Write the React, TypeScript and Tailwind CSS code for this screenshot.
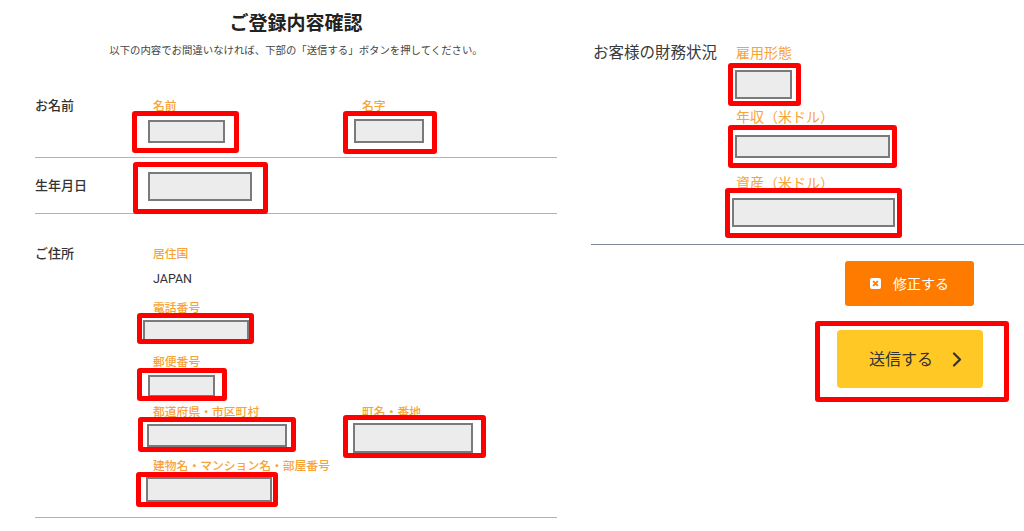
import React from "react";

const RED = "relative overflow-hidden rounded-[3px] border-[5px] border-[#ff0000] shrink-0";
const INNER = "border-2 border-[#7a7a7a] bg-[#ececec] shrink-0";

function Box({ outer, inner }: { outer: string; inner: string }) {
  return (
    <div className={`${RED} ${outer}`}>
      <div className={`${INNER} ${inner}`} />
    </div>
  );
}

function OLabel({ children, cls = "" }: { children: React.ReactNode; cls?: string }) {
  return (
    <div className={`whitespace-nowrap text-[11.8px] font-medium leading-[14px] text-[#f8a337] ${cls}`}>{children}</div>
  );
}

function RLabel({ children, cls = "" }: { children: React.ReactNode; cls?: string }) {
  return (
    <div className={`whitespace-nowrap text-[14px] leading-[17px] text-[#f8a337] ${cls}`}>{children}</div>
  );
}

function CloseIcon() {
  return (
    <svg width="11" height="11" viewBox="0 0 11 11" className="shrink-0">
      <rect x="0" y="0" width="11" height="11" rx="2" fill="#ffffff" />
      <path d="M3.6 3.6 L7.4 7.4 M7.4 3.6 L3.6 7.4" stroke="#ff7b00" strokeWidth="1.8" strokeLinecap="round" />
    </svg>
  );
}

function Chevron() {
  return (
    <svg width="10" height="15" viewBox="0 0 10 15" className="shrink-0">
      <path d="M2 1.5 L8 7.5 L2 13.5" fill="none" stroke="#333333" strokeWidth="2.2" strokeLinecap="round" strokeLinejoin="round" />
    </svg>
  );
}

export default function App() {
  return (
    <div className="flex h-[531px] w-[1024px] overflow-hidden bg-white font-['Noto_Sans','Noto_Sans_CJK_JP',sans-serif] text-[#333]">
      {/* Left column */}
      <div className="ml-[35px] flex w-[522px] shrink-0 flex-col">
        <h1 className="mt-[11px] text-center text-[19px] font-bold leading-[24px] text-[#222]">ご登録内容確認</h1>
        <p className="mt-[8px] text-center text-[10.4px] leading-[14px] text-[#444]">
          以下の内容でお間違いなければ、下部の「送信する」ボタンを押してください。
        </p>

        {/* お名前 */}
        <div className="flex border-b border-[#adb3bc] pb-[3px] pt-[41px]">
          <div className="w-[118px] shrink-0 text-[13px] font-medium leading-[14px]">お名前</div>
          <div className="flex items-start">
            <div className="w-[209px] shrink-0">
              <OLabel>名前</OLabel>
              <Box outer="-ml-[21px] -mt-[1px] w-[107px] h-[42px]" inner="ml-[11px] mt-[4px] w-[77px] h-[23px]" />
            </div>
            <div>
              <OLabel>名字</OLabel>
              <Box outer="-ml-[19px] -mt-[1px] w-[94px] h-[43px]" inner="ml-[6px] mt-[3px] w-[70px] h-[24px]" />
            </div>
          </div>
        </div>

        {/* 生年月日 */}
        <div className="flex border-b border-[#adb3bc] pt-[4px]">
          <div className="w-[118px] shrink-0 pt-[15px] text-[13px] font-medium leading-[16px]">生年月日</div>
          <Box outer="-ml-[20px] -mb-[1px] w-[135px] h-[52px]" inner="ml-[10px] mt-[5px] w-[104px] h-[29px]" />
        </div>

        {/* ご住所 */}
        <div className="flex border-b border-[#adb3bc] pb-[10px] pt-[31px]">
          <div className="w-[118px] shrink-0 text-[13px] font-medium leading-[16px]">ご住所</div>
          <div className="flex flex-col items-start">
            <OLabel cls="mt-[1px]">居住国</OLabel>
            <div className="mt-[11px] font-['Roboto',sans-serif] text-[12.5px] leading-[16px] text-[#333]">JAPAN</div>
            <OLabel cls="mt-[13px]">電話番号</OLabel>
            <Box outer="-ml-[16px] -mt-[1px] w-[117px] h-[31px]" inner="ml-[1px] mt-[2px] w-[106px] h-[22px]" />
            <OLabel cls="mt-[10px]">郵便番号</OLabel>
            <Box outer="-ml-[16px] w-[90px] h-[33px]" inner="ml-[6px] mt-[2px] w-[67px] h-[22px]" />
            <div className="mt-[3px] flex items-start">
              <div className="w-[209px] shrink-0">
                <OLabel>都道府県・市区町村</OLabel>
                <Box outer="-ml-[15px] -mt-[1px] w-[158px] h-[35px]" inner="ml-[4px] mt-[2px] w-[140px] h-[23px]" />
              </div>
              <div>
                <OLabel>町名・番地</OLabel>
                <Box outer="-ml-[19px] -mt-[3px] w-[143px] h-[43px]" inner="ml-[5px] mt-[3px] w-[120px] h-[30px]" />
              </div>
            </div>
            <OLabel>建物名・マンション名・部屋番号</OLabel>
            <Box outer="-ml-[17px] w-[142px] h-[35px]" inner="ml-[5px] w-[126px] h-[25px]" />
          </div>
        </div>
      </div>

      {/* Right column */}
      <div className="ml-[34px] flex w-[433px] shrink-0 flex-col">
        <div className="flex border-b border-[#7d8896] pb-[6px] pt-[42px]">
          <div className="w-[145px] shrink-0 whitespace-nowrap pl-[2px] text-[15.5px] leading-[20px] text-[#3a3a3a]">
            お客様の財務状況
          </div>
          <div className="flex flex-col items-start pt-[2px]">
            <RLabel>雇用形態</RLabel>
            <Box outer="-ml-[8px] mt-[2px] w-[73px] h-[43px]" inner="ml-[2px] mt-[2px] w-[57px] h-[29px]" />
            <RLabel cls="mt-[2px]">年収（米ドル）</RLabel>
            <Box outer="-ml-[8px] w-[169px] h-[43px]" inner="ml-[2px] mt-[5px] w-[155px] h-[23px]" />
            <RLabel cls="mt-[6px]">資産（米ドル）</RLabel>
            <Box outer="-ml-[11px] -mt-[3px] w-[177px] h-[50px]" inner="ml-[2px] mt-[5px] w-[163px] h-[29px]" />
          </div>
        </div>

        <button className="ml-[254px] mt-[16px] flex h-[45px] w-[129px] items-center justify-center gap-[12px] rounded-[3px] bg-[#ff7b00] text-[14px] leading-[18px] text-white">
          <CloseIcon />
          <span>修正する</span>
        </button>

        <div className="ml-[224px] mt-[15px] h-[81px] w-[194px] rounded-[3px] border-[5px] border-[#ff0000]">
          <button className="ml-[17px] mt-[4px] flex h-[58px] w-[146px] items-center gap-[19px] rounded-[4px] bg-[#ffc824] pl-[32px] text-[16px] leading-[20px] text-[#333]">
            <span>送信する</span>
            <Chevron />
          </button>
        </div>
      </div>
    </div>
  );
}
